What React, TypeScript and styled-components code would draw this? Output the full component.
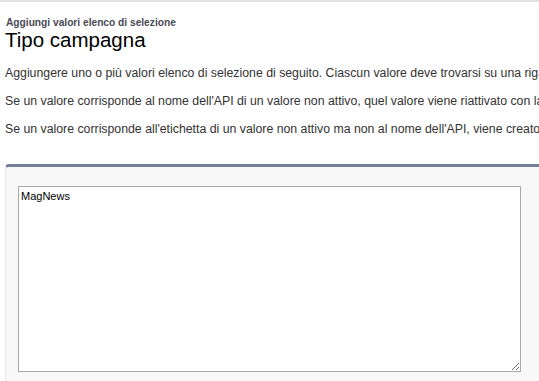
import { createGlobalStyle } from 'styled-components';
import styled from 'styled-components';

const GlobalStyle = createGlobalStyle`
  html, body {
    margin: 0;
    padding: 0;
    background: #fff;
    overflow: hidden;
  }
  body {
    font-family: Arial, "Liberation Sans", sans-serif;
    color: #333;
  }
`;

const Page = styled.div`
  border-top: 2px solid #e1e1e1;
  width: 539px;
  height: 379px;
  overflow: hidden;
`;

const Header = styled.div`
  padding: 14px 0 0 5px;
`;

const PageType = styled.h1`
  margin: 0 0 0 1px;
  font-size: 10.2px;
  font-weight: bold;
  color: #4a4a56;
  line-height: 13px;
`;

const PageTitle = styled.h2`
  margin: 0;
  font-size: 20.5px;
  font-weight: normal;
  color: #000;
  line-height: 22px;
`;

const Intro = styled.div`
  padding: 15px 0 0 5px;
  white-space: nowrap;
`;

const Para = styled.p`
  margin: 0 0 14px;
  font-size: 12.3px;
  line-height: 14px;
  color: #333;
`;

const Panel = styled.div`
  margin: 28px 0 0 5px;
  width: 600px;
  background: #f8f8f8;
  border-top: 3px solid #747e96;
  border-left: 1px solid #eaeaea;
  border-top-left-radius: 4px;
  padding: 19px 0 10px 12px;
`;

const ValuesBox = styled.textarea`
  display: block;
  box-sizing: border-box;
  width: 503px;
  height: 186px;
  margin: 0;
  padding: 3px 2px;
  border: 1px solid #a9a9a9;
  background: #fff;
  font-family: Arial, "Liberation Sans", sans-serif;
  font-size: 11px;
  color: #000;
  resize: both;
  outline: none;
`;

export default function App() {
  return (
    <>
      <GlobalStyle />
      <Page>
        <Header>
          <PageType>Aggiungi valori elenco di selezione</PageType>
          <PageTitle>Tipo campagna</PageTitle>
        </Header>
        <Intro>
          <Para>
            Aggiungere uno o più valori elenco di selezione di seguito. Ciascun valore deve trovarsi su una riga separata.
          </Para>
          <Para>
            Se un valore corrisponde al nome dell'API di un valore non attivo, quel valore viene riattivato con la nuova etichetta.
          </Para>
          <Para>
            Se un valore corrisponde all'etichetta di un valore non attivo ma non al nome dell'API, viene creato un nuovo valore.
          </Para>
        </Intro>
        <Panel>
          <ValuesBox defaultValue="MagNews" />
        </Panel>
      </Page>
    </>
  );
}
